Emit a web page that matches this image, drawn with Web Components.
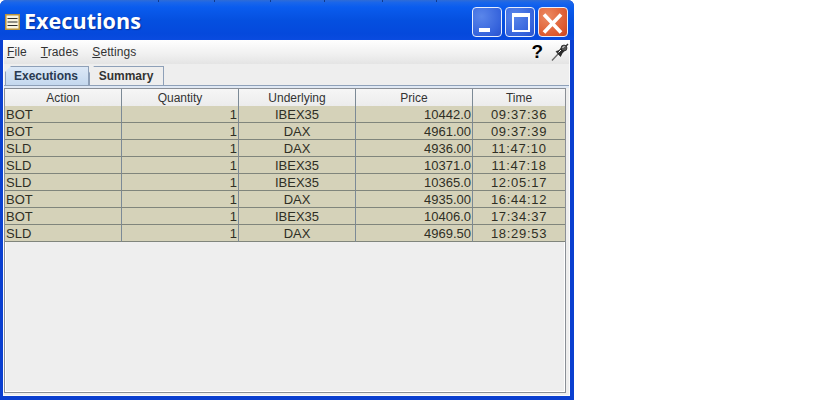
<!DOCTYPE html>
<html>
<head>
<meta charset="utf-8">
<title>Executions</title>
<style>
  html, body { margin: 0; background: #fff; overflow: hidden; }
  body { font-family: "Liberation Sans", Arial, sans-serif; }
</style>
</head>
<body>
<exec-window>
  <title-bar slot="title" label="Executions"></title-bar>
  <menu-bar></menu-bar>
  <tab-strip></tab-strip>
  <exec-table></exec-table>
</exec-window>

<script>
(function () {
  'use strict';

  class ExecWindow extends HTMLElement {
    constructor() {
      super();
      this.attachShadow({ mode: 'open' }).innerHTML = `
        <style>
          :host { display: flex; flex-direction: column; width: 574px; height: 400px; box-sizing: border-box;
                  background: #0a3fd0; border-radius: 6px 6px 0 0; overflow: hidden; }
          .frame { flex: 1; display: flex; flex-direction: column; min-height: 0; margin: 0 4px 4px 3px;
                   background: #eeeeee; border: 1px solid #fbfbfb; border-top: none; }
        </style>
        <slot name="title"></slot>
        <div class="frame"><slot></slot></div>`;
    }
  }

  class TitleBar extends HTMLElement {
    constructor() {
      super();
      // the small marks along the top edge are drawn as 1px background layers
      const ticks = [158, 214, 270, 324, 382, 436];
      const layers = ticks.map(() => 'linear-gradient(#123a8c, #123a8c)').join(',');
      const pos = ticks.map(x => x + 'px 0').join(',');
      this.attachShadow({ mode: 'open' }).innerHTML = `
        <style>
          :host { display: flex; align-items: center; height: 40px; flex: none; box-sizing: border-box; padding: 4px 6px 0 5px;
                  background-image: ${layers}, linear-gradient(#2f6cd6 0, #1a66ea 6%, #0a5cee 18%, #0550e0 50%, #0549dc 85%, #0a4be0 100%);
                  background-size: ${ticks.map(() => '1px 2px').join(',')}, 100% 100%;
                  background-position: ${pos}, 0 0;
                  background-repeat: no-repeat;
                  color: #fff; }
          .ico { width: 15px; height: 16px; flex: none; }
          .name { flex: 1; margin: -2px 0 0 4px; font: bold 21.6px/28px "Open Sans", "DejaVu Sans", sans-serif;
                  text-shadow: 1px 1px 1px #0a2f9a; }
          .btns { display: flex; gap: 3px; }
          .btn { width: 30px; height: 30px; box-sizing: border-box; border: 1px solid #e8eefc; border-radius: 4px;
                 background: radial-gradient(circle at 30% 30%, #5a86ea, #3563dc 70%, #2a52cc);
                 display: flex; }
          .btn.close { background: radial-gradient(circle at 30% 30%, #ec8a62, #dd5a30 70%, #c8431e); }
          svg.g { width: 28px; height: 28px; }
        </style>
        <svg class="ico" viewBox="0 0 15 16">
          <rect x=".75" y=".75" width="13.500" height="14.500" fill="#f7f3e2" stroke="#b8923c" stroke-width="1.500"/>
          <path d="M2.500 4.500h10M2.500 8h10M2.500 11.500h10" stroke="#2a2a2a" stroke-width="1"/>
        </svg>
        <span class="name"></span>
        <div class="btns">
          <div class="btn"><svg class="g" viewBox="0 0 28 28"><rect x="6" y="20" width="11" height="4" fill="#fff"/></svg></div>
          <div class="btn"><svg class="g" viewBox="0 0 28 28"><rect x="7" y="6" width="16" height="17" fill="none" stroke="#fff" stroke-width="2"/><rect x="6" y="5" width="18" height="4" fill="#fff"/></svg></div>
          <div class="btn close"><svg class="g" viewBox="0 0 28 28"><path d="M5 6.500L22 24.500M22 6.500L5 24.500" stroke="#fff" stroke-width="3.600"/></svg></div>
        </div>`;
      this.shadowRoot.querySelector('.name').textContent = this.getAttribute('label');
    }
  }

  class MenuBar extends HTMLElement {
    constructor() {
      super();
      this.attachShadow({ mode: 'open' }).innerHTML = `
        <style>
          :host { display: flex; align-items: center; height: 24px; flex: none; padding: 0 0 0 3px;
                  background: linear-gradient(#ffffff, #f0f0f0 60%, #e4e4e4);
                  font: 12px "Liberation Sans", Arial, sans-serif; color: #333; box-sizing: border-box; }
          span.m { margin-right: 14px; letter-spacing: .1px; }
          u { text-underline-offset: 1px; }
          .fill { flex: 1; }
          .help { font: bold 19px/20px "Liberation Sans", Arial, sans-serif; color: #000; margin-right: 8px; }
          svg { width: 18px; height: 18px; flex: none; }
        </style>
        <span class="m"><u>F</u>ile</span>
        <span class="m"><u>T</u>rades</span>
        <span class="m"><u>S</u>ettings</span>
        <span class="fill"></span>
        <span class="help">?</span>
        <svg viewBox="0 0 18 18">
          <path d="M1 17.500L7.500 10.500" stroke="#666" stroke-width="1.300"/>
          <path d="M5 8.500L9.500 13.500L11 10.500L14 7L11 4L8 7.500Z" fill="#2c2c2c" stroke="#111" stroke-width=".6"/>
          <circle cx="13" cy="5" r="3" fill="#555" stroke="#111" stroke-width=".6"/>
          <path d="M7.500 9.500L10 7M11.500 4.500L13.500 3.500" stroke="#fff" stroke-width="1"/>
          <path d="M15 3L17 1" stroke="#333" stroke-width="1.500"/>
        </svg>`;
    }
  }

  class TabStrip extends HTMLElement {
    constructor() {
      super();
      this.attachShadow({ mode: 'open' }).innerHTML = `
        <style>
          :host { display: flex; flex-direction: column; height: 24px; flex: none; box-sizing: border-box;
                  font: bold 12px "Liberation Sans", Arial, sans-serif; color: #333; }
          .row { display: flex; align-items: flex-end; height: 22px; box-sizing: border-box; padding-left: 1px;
                 border-bottom: 1px solid #8ea0b8; }
          .band { height: 2px; background: #dfe8f4; }
          .tab { height: 19px; box-sizing: border-box; display: flex; align-items: center; justify-content: center;
                 border: 1px solid #8ea0b8; border-bottom: none; background: #eeeeee; }
          .tab.on { width: 84px; padding-right: 2px; background: linear-gradient(#dce8f6, #c4d8ee); color: #2a3a50;
                    clip-path: polygon(6px 0, 100% 0, 100% 100%, 0 100%, 0 6px); }
          .tab.off { width: 75px; padding-right: 1px; clip-path: polygon(5px 0, 100% 0, 100% 100%, 0 100%, 0 7px); }
        </style>
        <div class="row">
          <div class="tab on">Executions</div>
          <div class="tab off">Summary</div>
        </div>
        <div class="band"></div>`;
    }
  }

  const ROWS = [
    ['BOT', '1', 'IBEX35', '10442.0', '09:37:36'],
    ['BOT', '1', 'DAX', '4961.00', '09:37:39'],
    ['SLD', '1', 'DAX', '4936.00', '11:47:10'],
    ['SLD', '1', 'IBEX35', '10371.0', '11:47:18'],
    ['SLD', '1', 'IBEX35', '10365.0', '12:05:17'],
    ['BOT', '1', 'DAX', '4935.00', '16:44:12'],
    ['BOT', '1', 'IBEX35', '10406.0', '17:34:37'],
    ['SLD', '1', 'DAX', '4969.50', '18:29:53']
  ];
  const HEAD = ['Action', 'Quantity', 'Underlying', 'Price', 'Time'];
  const ALIGN = ['l', 'r', 'c', 'r', 'c t'];

  class ExecTable extends HTMLElement {
    constructor() {
      super();
      const head = HEAD.map(h => `<div class="th">${h}</div>`).join('');
      const body = ROWS.map(r => r.map((v, i) => `<div class="td ${ALIGN[i]}">${v}</div>`).join('')).join('');
      this.attachShadow({ mode: 'open' }).innerHTML = `
        <style>
          :host { display: block; flex: 1; min-height: 0; margin: 0 3px 2px 0; border: 1px solid #8a8f96;
                  box-shadow: inset 0 0 0 1px #fff; font: 13px "Liberation Sans", Arial, sans-serif; }
          .grid { display: grid; grid-template-columns: 117px 117px 117px 117px 92px; grid-auto-rows: 17px; }
          .th { line-height: 18px; box-sizing: border-box; text-align: center; font-size: 12px; color: #333;
                background: linear-gradient(#f6f6f6, #ececec); border-right: 1px solid #7c8a96; overflow: hidden; }
          .td { box-sizing: border-box; background: #d5d2b9; color: #2f2f25; line-height: 18px; padding: 0 1px;
                border-right: 1px solid #7c8a96; border-bottom: 1px solid #80857c; white-space: nowrap; overflow: hidden; }
          .th:nth-child(5n), .td:nth-child(5n) { border-right: none; }
          .r { text-align: right; }
          .c { text-align: center; }
          .t { letter-spacing: .7px; }
        </style>
        <div class="grid">${head}${body}</div>`;
    }
  }

  customElements.define('exec-window', ExecWindow);
  customElements.define('title-bar', TitleBar);
  customElements.define('menu-bar', MenuBar);
  customElements.define('tab-strip', TabStrip);
  customElements.define('exec-table', ExecTable);
})();
</script>
</body>
</html>
